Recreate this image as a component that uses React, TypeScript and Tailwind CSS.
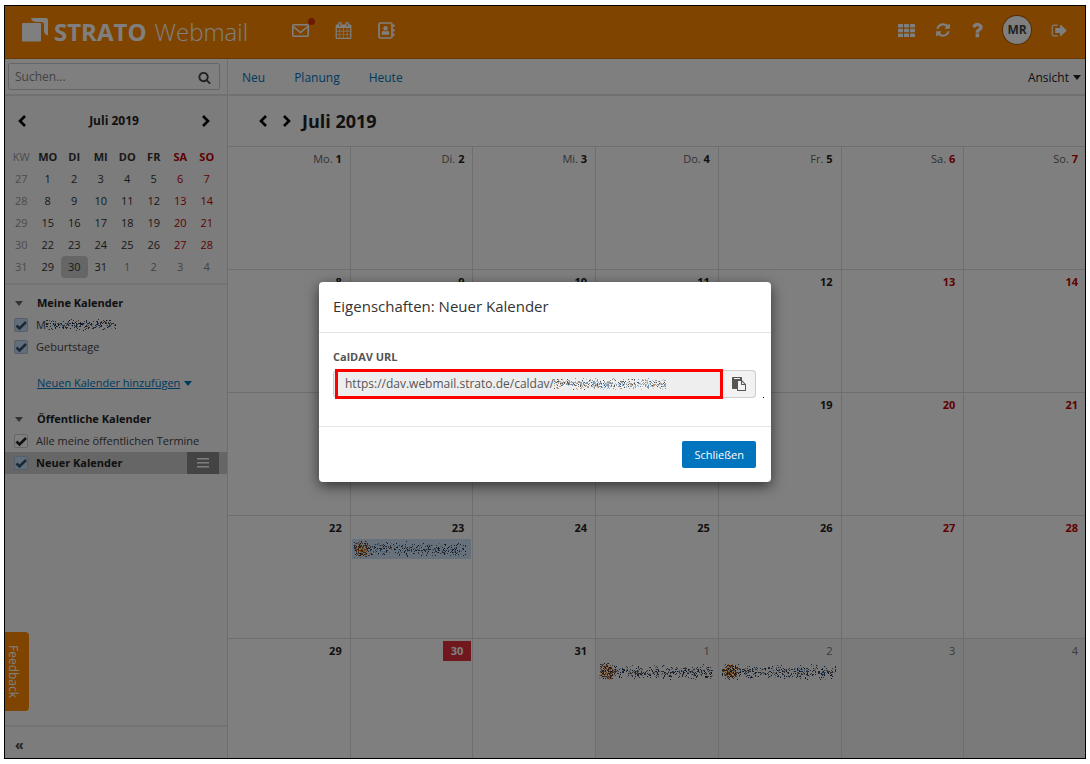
import React, { useState } from 'react';
import { clsx } from 'clsx';

type IconProps = { className?: string };

const weekdays = ['Mo.', 'Di.', 'Mi.', 'Do.', 'Fr.', 'Sa.', 'So.'];

const miniHead = ['MO', 'DI', 'MI', 'DO', 'FR', 'SA', 'SO'];

const miniWeeks = [
  { kw: 27, days: [1, 2, 3, 4, 5, 6, 7] },
  { kw: 28, days: [8, 9, 10, 11, 12, 13, 14] },
  { kw: 29, days: [15, 16, 17, 18, 19, 20, 21] },
  { kw: 30, days: [22, 23, 24, 25, 26, 27, 28] },
  { kw: 31, days: [29, 30, 31, 1, 2, 3, 4] },
];

const isOtherMonth = (kw: number, day: number) => kw === 31 && day < 10;

/* Icons */

const Glyph = ({ d, className }: IconProps & { d: string }) => (
  <svg viewBox="0 0 1792 1792" fill="currentColor" className={className} aria-hidden="true">
    <path d={d} />
  </svg>
);

const calendarPath =
  'M192 1664h288v-288h-288v288zm352 0h320v-288h-320v288zm-352-352h288v-320h-288v320zm352 0h320v-320h-320v320zm-352-384h288v-288h-288v288zm736 736h320v-288h-320v288zm-384-736h320v-288h-320v288zm768 736h288v-288h-288v288zm-384-352h320v-320h-320v320zm-352-864v-288q0-13-9.5-22.5t-22.5-9.5h-64q-13 0-22.5 9.5t-9.5 22.5v288q0 13 9.5 22.5t22.5 9.5h64q13 0 22.5-9.5t9.5-22.5zm736 864h288v-320h-288v320zm-384-384h320v-288h-320v288zm384 0h288v-288h-288v288zm32-480v-288q0-13-9.5-22.5t-22.5-9.5h-64q-13 0-22.5 9.5t-9.5 22.5v288q0 13 9.5 22.5t22.5 9.5h64q13 0 22.5-9.5t9.5-22.5zm384-64v1280q0 52-38 90t-90 38h-1408q-52 0-90-38t-38-90v-1280q0-52 38-90t90-38h128v-96q0-66 47-113t113-47h64q66 0 113 47t47 113v96h384v-96q0-66 47-113t113-47h64q66 0 113 47t47 113v96h128q52 0 90 38t38 90z';
const refreshPath =
  'M1639 1056q0 5-1 7-64 268-268 434.5t-478 166.5q-146 0-282.5-55t-243.5-157l-129 129q-19 19-45 19t-45-19-19-45v-448q0-26 19-45t45-19h448q26 0 45 19t19 45-19 45l-137 137q71 66 161 102t187 36q134 0 250-65t186-179q11-17 53-117 8-23 30-23h192q13 0 22.5 9.5t9.5 22.5zm25-800v448q0 26-19 45t-45 19h-448q-26 0-45-19t-19-45 19-45l138-138q-148-137-349-137-134 0-250 65t-186 179q-11 17-53 117-8 23-30 23h-199q-13 0-22.5-9.5t-9.5-22.5v-7q65-268 270-434.5t480-166.5q146 0 284 55.5t245 156.5l130-129q19-19 45-19t45 19 19 45z';
const questionPath =
  'M1088 1256v240q0 16-12 28t-28 12h-240q-16 0-28-12t-12-28v-240q0-16 12-28t28-12h240q16 0 28 12t12 28zm316-600q0 54-15.5 101t-35 76.5-55 59.5-57.5 43.5-61 35.5q-41 23-68.5 65t-27.5 67q0 17-12 32.5t-28 15.5h-240q-15 0-25.5-18.5t-10.5-37.5v-45q0-83 65-156.5t143-108.5q59-27 84-56t25-76q0-42-46.5-74t-107.5-32q-65 0-108 29-35 25-107 115-13 16-31 16-12 0-25-8l-164-125q-13-10-15.5-25t5.5-28q160-266 464-266 80 0 161 31t146 83 106 127.5 41 158.5z';
const signOutPath =
  'M704 1440q0 4 1 20t.5 26.5-3 23.5-10 19.5-20.5 6.5h-320q-119 0-203.5-84.5t-84.5-203.5v-704q0-119 84.5-203.5t203.5-84.5h320q13 0 22.5 9.5t9.5 22.5q0 4 1 20t.5 26.5-3 23.5-10 19.5-20.5 6.5h-320q-66 0-113 47t-47 113v704q0 66 47 113t113 47h312l11.5 1 11.5 3 8 5.5 7 9 2 13.5zm928-544q0 26-19 45l-544 544q-19 19-45 19t-45-19-19-45v-288h-448q-26 0-45-19t-19-45v-384q0-26 19-45t45-19h448v-288q0-26 19-45t45-19 45 19l544 544q19 19 19 45z';
const searchPath =
  'M1216 832q0-185-131.5-316.5t-316.5-131.5-316.5 131.5-131.5 316.5 131.5 316.5 316.5 131.5 316.5-131.5 131.5-316.5zm512 832q0 52-38 90t-90 38q-54 0-90-38l-343-342q-179 124-399 124-143 0-273.5-55.5t-225-150-150-225-55.5-273.5 55.5-273.5 150-225 225-150 273.5-55.5 273.5 55.5 225 150 150 225 55.5 273.5q0 220-124 399l343 343q37 37 37 90z';
const pastePath =
  'M768 1664h896v-640h-416q-40 0-68-28t-28-68v-416h-384v1152zm256-1440v-64q0-13-9.5-22.5t-22.5-9.5h-704q-13 0-22.5 9.5t-9.5 22.5v64q0 13 9.5 22.5t22.5 9.5h704q13 0 22.5-9.5t9.5-22.5zm256 672h299l-299-299v299zm512 128v672q0 40-28 68t-68 28h-960q-40 0-68-28t-28-68v-160h-544q-40 0-68-28t-28-68v-1344q0-40 28-68t68-28h1088q40 0 68 28t28 68v328q21 13 36 28l408 408q28 28 48 76t20 88z';

const LogoMark = () => (
  <svg viewBox="0 0 26 24" className="h-6 w-[26px]" fill="currentColor" aria-hidden="true">
    <rect x="0" y="5" width="19" height="18.500" rx="1" />
    <path d="M9 0h15q2 0 2 2v15.500q-4-1-4-4.500V6.500q0-2.500-2.500-2.500h-5.500q-4 0-5-4z" />
  </svg>
);

const MailIcon = () => (
  <svg viewBox="0 0 17 13" className="h-[13px] w-[17px]" fill="none" stroke="currentColor" aria-hidden="true">
    <rect x="0.800" y="0.800" width="15.400" height="11.400" rx="1" strokeWidth="1.600" />
    <path d="M1.200 2.500L8.500 8.500L15.800 2.500" strokeWidth="1.600" />
  </svg>
);

const ContactsIcon = () => (
  <svg viewBox="0 0 17 17" className="size-[17px]" fill="none" aria-hidden="true">
    <rect x="1" y="1" width="13" height="15" rx="1.500" stroke="currentColor" strokeWidth="1.700" />
    <circle cx="7.500" cy="6.200" r="2.200" fill="currentColor" />
    <path d="M3.700 12.800V11.500Q3.700 8.800 5.700 8.800Q7.500 10 9.300 8.800Q11.300 8.800 11.300 11.500V12.800z" fill="currentColor" />
    <path d="M15 2.500h1.500v2.500H15zM15 7h1.500v2.500H15zM15 11.500h1.500V14H15z" fill="currentColor" />
  </svg>
);

const AppsIcon = () => (
  <svg viewBox="0 0 17 13" className="h-[13px] w-[17px]" fill="currentColor" aria-hidden="true">
    {[0, 6, 12].map((x) =>
      [0, 4.7, 9.4].map((y) => <rect key={`${x}-${y}`} x={x} y={y} width="5" height="3.600" rx="0.600" />)
    )}
  </svg>
);

const Chevron = ({ dir, className }: IconProps & { dir: 'left' | 'right' }) => (
  <svg viewBox="0 0 10 14" className={clsx('h-3.5 w-2.5', className)} fill="none" stroke="currentColor" strokeWidth="2.600" aria-hidden="true">
    <path d={dir === 'left' ? 'M8 2L3 7L8 12' : 'M2 2L7 7L2 12'} />
  </svg>
);

const Caret = ({ className }: IconProps) => (
  <svg viewBox="0 0 8 5" className={clsx('h-[5px] w-2', className)} fill="currentColor" aria-hidden="true">
    <path d="M0 0h8L4 5z" />
  </svg>
);

/* Anonymised text: a band of coloured speckles */

const inkTones = ['#202430', '#4a5568', '#24508a', '#7a6a5c', '#8fb4d6', '#3a3f4a'];
const paleTones = ['#555555', '#8a8f98', '#6f9cc4', '#c49a6f', '#a8c8e0', '#b0b0b0'];
const burstTones = ['#c46a12', '#6b3a1a', '#e0a050', '#2b2b33', '#9c4a30'];

const Speckle = ({ seed, width, height, count, burst = false, tones = inkTones }: {
  seed: number; width: number; height: number; count: number; burst?: boolean; tones?: string[];
}) => {
  let s = seed;
  const rnd = () => {
    s = (s * 16807) % 2147483647;
    return s / 2147483647;
  };
  const dots: React.ReactNode[] = [];
  for (let i = 0; i < count; i++) {
    const x = Math.floor(rnd() * width);
    const y = Math.floor(((rnd() + rnd() + rnd()) / 3) * height);
    dots.push(<rect key={i} x={x} y={y} width="1" height="1" fill={tones[Math.floor(rnd() * tones.length)]} />);
  }
  if (burst) {
    for (let i = 0; i < 150; i++) {
      const x = Math.floor(((rnd() + rnd()) / 2) * 17);
      const y = Math.floor(((rnd() + rnd()) / 2) * height);
      dots.push(<rect key={`b${i}`} x={x} y={y} width="1" height="1" fill={burstTones[Math.floor(rnd() * burstTones.length)]} />);
    }
  }
  return (
    <svg width={width} height={height} viewBox={`0 0 ${width} ${height}`} className="shrink-0" aria-hidden="true">
      {dots}
    </svg>
  );
};

const Header = () => (
  <header className="flex h-[53px] shrink-0 items-center border-b border-[#d87300] bg-[#ff8800] px-[17px] pb-1 text-white">
    <a href="#" className="flex items-center">
      <LogoMark />
      <span className="ml-1.5 pt-1 text-[24px] leading-6 font-bold">STRATO</span>
      <span className="ml-2 pt-1 text-[24px] leading-6 font-light">Webmail</span>
    </a>
    <nav className="ml-11 flex items-center gap-[26px]">
      <a href="#" aria-label="E-Mail" className="relative">
        <MailIcon />
        <span className="absolute -top-1.5 -right-1.5 size-[7px] rounded-full bg-[#d9300f]" />
      </a>
      <a href="#" aria-label="Kalender"><Glyph d={calendarPath} className="size-[17px]" /></a>
      <a href="#" aria-label="Adressbuch"><ContactsIcon /></a>
    </nav>
    <div className="ml-auto flex items-center gap-5">
      <button aria-label="Apps"><AppsIcon /></button>
      <button aria-label="Aktualisieren"><Glyph d={refreshPath} className="size-4" /></button>
      <button aria-label="Hilfe"><Glyph d={questionPath} className="-mx-1 size-5" /></button>
      <button className="size-7 rounded-full bg-white text-[12px] font-bold text-[#444] ring-1 ring-[#a85a00]">MR</button>
      <button aria-label="Abmelden"><Glyph d={signOutPath} className="size-[17px]" /></button>
    </div>
  </header>
);

const MiniCalendar = () => (
  <div className="border-b-2 border-[#e8e8e8] pr-[7px] pb-[5px] pl-[3px]">
    <div className="flex h-[50px] items-center justify-between px-[9px]">
      <button aria-label="Vorheriger Monat"><Chevron dir="left" className="text-black" /></button>
      <span className="text-[12px] font-bold text-[#222]">Juli 2019</span>
      <button aria-label="Nächster Monat"><Chevron dir="right" className="text-black" /></button>
    </div>
    <table className="w-full table-fixed text-center text-[11px] leading-4">
      <thead>
        <tr className="h-[22px]">
          <th className="font-normal text-[#999]">KW</th>
          {miniHead.map((d, i) => (
            <th key={d} className={clsx('font-bold', i > 4 ? 'text-[#c00000]' : 'text-[#333]')}>{d}</th>
          ))}
        </tr>
      </thead>
      <tbody>
        {miniWeeks.map(({ kw, days }) => (
          <tr key={kw} className="h-[22px]">
            <td className="text-[#999]">{kw}</td>
            {days.map((d, i) => (
              <td
                key={d}
                className={clsx(
                  isOtherMonth(kw, d) ? 'text-[#888]' : i > 4 ? 'text-[#c00000]' : 'text-[#333]',
                  d === 30 && 'rounded-sm bg-[#ccc]'
                )}
              >
                {d}
              </td>
            ))}
          </tr>
        ))}
      </tbody>
    </table>
  </div>
);

const CheckRow = ({ id, tone = 'blue', active = false, children }: {
  id: string; tone?: 'blue' | 'plain'; active?: boolean; children: React.ReactNode;
}) => {
  const [checked, setChecked] = useState(true);

  return (
    <div className={clsx('flex h-[22px] items-center pl-[9px]', active && 'bg-[#ccc]')}>
      <span className="grid">
        <input
          id={id}
          type="checkbox"
          checked={checked}
          onChange={() => setChecked(!checked)}
          className={clsx(
            'col-start-1 row-start-1 size-3.5 appearance-none rounded-xs border',
            tone === 'blue' ? 'border-[#a9bfd4] bg-[#c4dcf4]' : 'border-[#ccc] bg-white'
          )}
        />
        {checked && (
          <svg viewBox="0 0 14 14" className="pointer-events-none col-start-1 row-start-1 size-3.5" fill="none" stroke={tone === 'blue' ? '#34506e' : '#222'} strokeWidth="2.600">
            <path d="M2.500 7.500L5.500 10.500L12 4" />
          </svg>
        )}
      </span>
      <label htmlFor={id} className={clsx('ml-2 flex flex-1 items-center', active && 'font-bold text-[#222]')}>
        {children}
      </label>
      {active && (
        <button aria-label="Optionen" className="mr-2 flex h-full w-8 items-center justify-center bg-[#888]">
          <svg viewBox="0 0 12 10" className="h-2.5 w-3" fill="#fff"><path d="M0 0h12v1.500H0zM0 4h12v1.500H0zM0 8h12v1.500H0z" /></svg>
        </button>
      )}
    </div>
  );
};

const FolderHeading = ({ children }: { children: React.ReactNode }) => (
  <h2 className="flex h-[22px] items-center pl-2.5 font-bold text-[#222]">
    <Caret className="text-[#666]" />
    <span className="ml-3.5">{children}</span>
  </h2>
);

const Sidebar = () => (
  <aside className="flex w-[223px] shrink-0 flex-col border-r border-[#ddd] bg-[#f8f8f8] text-[11px]">
    <MiniCalendar />
    <div className="flex-1 pt-[7px]">
      <FolderHeading>Meine Kalender</FolderHeading>
      <CheckRow id="cal-own">
        M<Speckle seed={77} width={70} height={14} count={260} />
      </CheckRow>
      <CheckRow id="cal-birthdays">Geburtstage</CheckRow>
      <div className="flex h-[50px] items-center pl-8">
        <a href="#" className="text-[#0074bd] underline">Neuen Kalender hinzufügen</a>
        <Caret className="ml-1 text-[#0074bd]" />
      </div>
      <FolderHeading>Öffentliche Kalender</FolderHeading>
      <CheckRow id="cal-public" tone="plain">Alle meine öffentlichen Termine</CheckRow>
      <CheckRow id="cal-new" active>Neuer Kalender</CheckRow>
    </div>
    <div className="flex h-[33px] items-center border-t-2 border-[#e8e8e8] pt-1 pl-2.5">
      <button aria-label="Seitenleiste einklappen" className="text-[14px] leading-4 font-bold">«</button>
    </div>
  </aside>
);

const DayCell = ({ day, col, row }: { day: number; col: number; row: number }) => {
  const other = row === 4 && day < 10;
  const today = day === 30;

  return (
    <div className={clsx('border-t border-r border-[#dcdcdc]', other && 'bg-[#f4f4f4]')}>
      <div className="flex h-[23px] items-center justify-end">
        <span
          className={clsx(
            'px-2',
            today && 'mr-px bg-[#e0303c] py-0.5 text-white',
            !today && col > 4 && !other && 'text-[#c00000]',
            !today && col < 5 && !other && 'text-[#222]',
            other ? 'text-[#777]' : 'font-bold'
          )}
        >
          {row === 0 && <span className="font-normal text-[#666]">{weekdays[col]} </span>}
          {day}
        </span>
      </div>
      {day === 23 && (
        <div className="mx-px flex h-5 items-center overflow-hidden bg-[#cfe2f8] pl-0.5">
          <Speckle seed={23} width={112} height={18} count={380} burst />
        </div>
      )}
      {other && day < 3 && (
        <div className="mt-px overflow-hidden pl-[3px]">
          <Speckle seed={day * 311} width={114} height={18} count={460} burst />
        </div>
      )}
    </div>
  );
};

const MonthView = () => (
  <main className="flex min-w-0 flex-1 flex-col overflow-hidden bg-white">
    <div className="flex h-[50px] shrink-0 items-center pl-[30px]">
      <button aria-label="Zurück"><Chevron dir="left" className="text-black" /></button>
      <button aria-label="Weiter" className="ml-3.5"><Chevron dir="right" className="text-black" /></button>
      <h1 className="ml-2.5 text-[18px] leading-6 font-bold text-[#222]">Juli 2019</h1>
    </div>
    <div className="-mr-0.5 grid min-h-0 flex-1 auto-rows-[minmax(123px,1fr)] grid-cols-7 overflow-hidden text-[11px]">
      {miniWeeks.map(({ days }, row) =>
        days.map((day, col) => <DayCell key={`${row}-${col}`} day={day} col={col} row={row} />)
      )}
    </div>
  </main>
);

const PropertiesDialog = () => (
  <div className="absolute inset-0 flex items-center justify-center bg-black/50">
    <div role="dialog" aria-labelledby="dialog-title" className="relative w-[452px] rounded-sm bg-white shadow-[0_4px_14px_rgba(0,0,0,0.6)]">
      <h2 id="dialog-title" className="border-b border-[#e5e5e5] px-3.5 pt-3 pb-3.5 text-[15px] leading-6 text-[#333]">
        Eigenschaften: Neuer Kalender
      </h2>
      <div className="pt-4 pr-[15px] pb-7 pl-3.5">
        <label htmlFor="caldav-url" className="block text-[11px] font-bold text-[#555]">CalDAV URL</label>
        <div className="mt-[5px] flex h-7">
          <div className="relative flex flex-1 items-center rounded-l-sm border border-[#ccc] bg-[#eee] pl-[11px]">
            <input
              id="caldav-url"
              readOnly
              value="https://dav.webmail.strato.de/caldav/"
              className="field-sizing-content bg-transparent text-[#555] outline-none"
            />
            <Speckle seed={915} width={112} height={14} count={560} tones={paleTones} />
            <span className="pointer-events-none absolute -inset-y-0.5 -right-px left-px border-3 border-[#ff0000]" />
          </div>
          <button aria-label="Kopieren" className="flex w-[33px] items-center justify-center rounded-r-sm border border-l-0 border-[#ccc] bg-[#f2f2f2] text-[#555]">
            <Glyph d={pastePath} className="size-3.5" />
          </button>
        </div>
      </div>
      <div className="flex justify-end border-t border-[#e5e5e5] py-3.5 pr-[15px]">
        <button className="h-[27px] rounded-xs bg-[#0074bd] px-3 text-[11px] text-white">Schließen</button>
      </div>
      <span className="absolute right-[7px] bottom-[84px] size-px bg-black" />
    </div>
  </div>
);

const App = () => {
  return (
    <div className="h-screen px-1 py-[5px] font-['Open_Sans',sans-serif] text-[12px] leading-4 text-[#444]">
      <div className="relative flex h-full flex-col overflow-hidden border border-black bg-white">
        <Header />
        <div className="flex h-[37px] shrink-0 border-b-2 border-[#e2e2e2]">
          <div className="flex w-[223px] shrink-0 items-center border-r border-[#ddd] pr-[7px] pl-[3px]">
            <div className="flex h-[27px] flex-1 items-center rounded-xs border border-[#ccc] pt-px pr-2">
              <input aria-label="Suchen" placeholder="Suchen..." className="min-w-0 flex-1 px-1.5 outline-none placeholder:text-[#888]" />
              <Glyph d={searchPath} className="size-[13px] text-[#444]" />
            </div>
          </div>
          <div className="flex flex-1 items-center gap-[29px] pt-0.5 pl-3.5 text-[#0074bd]">
            <a href="#">Neu</a>
            <a href="#">Planung</a>
            <a href="#">Heute</a>
            <button className="mr-1 ml-auto flex items-center gap-1 text-[#222]">
              Ansicht <Caret />
            </button>
          </div>
        </div>
        <div className="flex min-h-0 flex-1">
          <Sidebar />
          <MonthView />
        </div>
        <button className="absolute bottom-[47px] left-0 flex h-[79px] w-6 items-center justify-center rounded-r-sm bg-[#ff8800] pr-2 text-white [writing-mode:vertical-rl]">
          Feedback
        </button>
        <PropertiesDialog />
      </div>
    </div>
  );
};

export default App;
